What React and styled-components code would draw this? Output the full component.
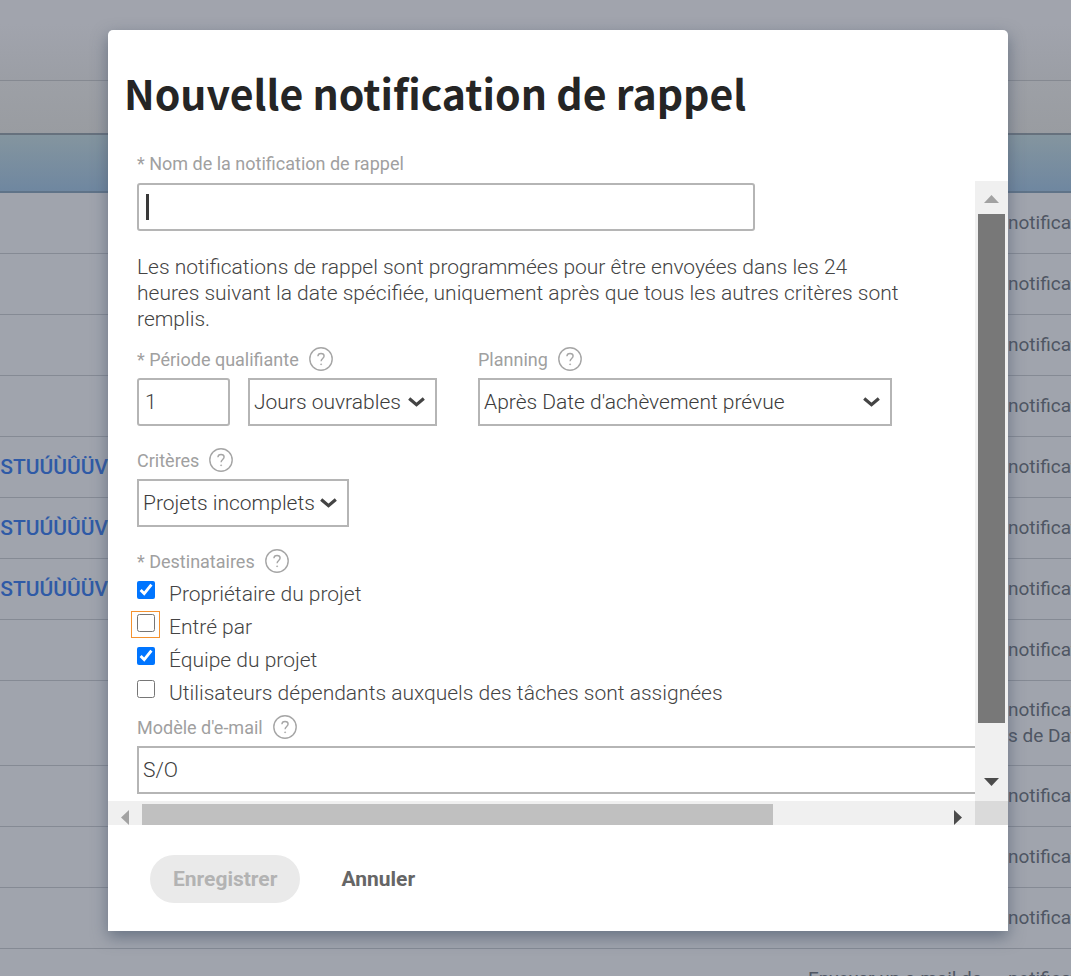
import React, { useState } from "react";
import styled, { createGlobalStyle } from "styled-components";

const sans = `Roboto, "Liberation Sans", sans-serif`;
const display = `"Noto Sans CJK JP", "Open Sans", sans-serif`;

const GlobalStyle = createGlobalStyle`
  *, *::before, *::after { box-sizing: border-box; }
  body { margin: 0; background: #a0a4ad; font-family: ${sans}; color: #666; }
`;

const Page = styled.div`
  position: relative;
  min-height: 100vh;
  overflow: hidden;
`;

const Backdrop = styled.div`
  position: absolute;
  inset: 0;
  overflow: hidden;
`;

const TopBar = styled.div`
  height: 81px;
  background: linear-gradient(#a1a4ad 0 30%, #9b9ea5);
  border-bottom: 1px solid #858991;
`;

const ToolBar = styled.div`
  height: 52px;
  background: linear-gradient(#9da0a6, #999ca1);
`;

const List = styled.table`
  width: 100%;
  border-collapse: separate;
  border-spacing: 0;
  table-layout: fixed;
`;

const HeadCell = styled.th`
  height: 60px;
  padding: 0;
  background: linear-gradient(#84959f, #6f87a0) padding-box;
  border-top: 2px solid #66717d;
  border-bottom: 2px solid #5f7388;
  width: ${(p) => p.$width || "auto"};
`;

const Cell = styled.td`
  height: ${(p) => (p.$tall ? 85 : 61)}px;
  padding: 0;
  border-bottom: 1px solid #858a94;
  font-size: 19px;
  line-height: 26px;
  color: #4f5663;
  white-space: nowrap;
  overflow: hidden;
`;

const NameLink = styled.a`
  display: flex;
  justify-content: flex-end;
  overflow: hidden;
  color: #2f5aa6;
  text-decoration: none;
  font-size: 21px;
  font-weight: 500;
`;

const Description = styled.div`
  display: grid;
  grid-template-columns: 200px auto;
`;

const Dialog = styled.div`
  position: relative;
  margin: 30px 63px 46px 108px;
  background: #fff;
  border-radius: 5px 5px 0 0;
  box-shadow: 0 6px 16px rgba(66, 82, 104, 0.6);
`;

const Title = styled.h1`
  margin: 0;
  padding: 30px 16px 0;
  font-family: ${display};
  font-weight: 700;
  font-size: 41px;
  line-height: 64px;
  color: #252525;
`;

const FieldLabel = styled.label`
  display: flex;
  align-items: center;
  gap: 10px;
  height: 24px;
  font-size: 18px;
  color: #a0a0a0;
  white-space: nowrap;
`;

const FirstLabel = styled.div`
  padding: 27px 29px 6px;
`;

const ScrollFrame = styled.div`
  display: grid;
  grid-template-columns: minmax(0, 1fr) 33px;
  grid-template-rows: 620px 24px;
`;

const Viewport = styled.div`
  overflow: hidden;
  padding: 2px 0 0 29px;
`;

const NameField = styled.div`
  position: relative;
  max-width: 618px;
`;

const TextInput = styled.input`
  display: block;
  width: ${(p) => p.$width || "100%"};
  height: 48px;
  padding: 0 6px;
  border: 2px solid #b5b5b5;
  border-radius: 3px;
  background: #fff;
  font-family: ${sans};
  font-size: 21px;
  font-weight: 300;
  color: #3c3c3c;
  outline: none;
`;

const Caret = styled.span`
  position: absolute;
  left: 9px;
  top: 11px;
  width: 3px;
  height: 26px;
  background: #3a3a3a;
`;

const Help = styled.p`
  margin: 0;
  padding: 23px 0 15px;
  font-size: 21px;
  font-weight: 300;
  line-height: 26px;
  color: #444;
  white-space: nowrap;
`;

const FieldRow = styled.div`
  display: flex;
  gap: 41px;
`;

const Field = styled.div`
  display: flex;
  flex-direction: column;
  gap: 7px;
  padding-bottom: 22px;
`;

const Controls = styled.div`
  display: flex;
  gap: 18px;
`;

const SelectBox = styled.div`
  position: relative;
  width: ${(p) => p.$width};

  svg {
    position: absolute;
    right: 12px;
    top: 18px;
    pointer-events: none;
  }
`;

const Select = styled.select`
  appearance: none;
  display: block;
  width: 100%;
  height: 48px;
  padding: 0 4px;
  border: 2px solid #b5b5b5;
  border-radius: 0;
  background: #fff;
  font-family: ${sans};
  font-size: 21px;
  font-weight: 300;
  color: #3c3c3c;
`;

const Fieldset = styled.fieldset`
  margin: 0;
  padding: 0;
  border: 0;
`;

const Legend = styled.legend`
  display: flex;
  align-items: center;
  gap: 10px;
  height: 24px;
  padding: 0;
  font-size: 18px;
  color: #a0a0a0;
`;

const Options = styled.div`
  display: grid;
  grid-auto-rows: 33px;
  padding: 4px 0 6px;
`;

const Option = styled.label`
  display: flex;
  gap: 14px;
  padding-top: 4px;
  font-size: 21px;
  font-weight: 300;
  line-height: 26px;
  color: #444;
`;

const TickBox = styled.span`
  position: relative;
  height: 18px;

  &::before {
    content: "";
    display: ${(p) => (p.$marked ? "block" : "none")};
    position: absolute;
    inset: -3px -5px -6px -6px;
    border: 1px solid #f5922f;
  }
`;

const Tick = styled.input`
  display: block;
  width: 18px;
  height: 18px;
  margin: 0;
  accent-color: #0075ff;
`;

const VerticalBar = styled.div`
  display: flex;
  flex-direction: column;
  align-items: center;
  background: #f0f0f0;
`;

const HorizontalBar = styled.div`
  display: flex;
  align-items: flex-end;
  background: #f0f0f0;
`;

const Arrow = styled.svg`
  display: block;
  flex: none;
  fill: ${(p) => (p.$dim ? "#a2a2a2" : "#4b4b4b")};
`;

const Track = styled.div`
  flex: 1;
  align-self: stretch;
  padding: ${(p) => p.$pad};
`;

const Thumb = styled.div`
  width: ${(p) => p.$width};
  height: ${(p) => p.$height};
  background: ${(p) => p.$color};
`;

const Corner = styled.div`
  background: #dadada;
`;

const Footer = styled.div`
  display: flex;
  gap: 18px;
  padding: 30px 42px 28px;
`;

const Button = styled.button`
  height: 48px;
  padding: 0 23px;
  border: 0;
  border-radius: 24px;
  background: ${(p) => (p.disabled ? "#eaeaea" : "transparent")};
  color: ${(p) => (p.disabled ? "#b3b3b3" : "#666")};
  font-family: ${sans};
  font-weight: 700;
  font-size: 21px;
`;

const QuestionIcon = () => (
  <svg width="24" height="24" viewBox="0 0 24 24" fill="none" stroke="#a6a6a6" aria-hidden="true">
    <circle cx="12" cy="12" r="11.2" strokeWidth="1.4" />
    <path d="M8.9 9.3c.1-1.8 1.3-2.8 3.1-2.8s3.1 1 3.1 2.6c0 2.3-3 2.4-3 5.1" strokeWidth="1.4" />
    <circle cx="12.1" cy="17.3" r=".5" fill="#a6a6a6" strokeWidth=".8" />
  </svg>
);

const Chevron = () => (
  <svg width="17" height="12" viewBox="0 0 17 12" fill="none" stroke="#444" strokeWidth="3.2" aria-hidden="true">
    <path d="M1.2 2.5l7.3 6.2 7.3-6.2" />
  </svg>
);

const Dropdown = ({ width, ...rest }) => (
  <SelectBox $width={width}>
    <Select {...rest} />
    <Chevron />
  </SelectBox>
);

const rows = [
  {}, {}, {}, {},
  { name: true }, { name: true }, { name: true },
  {}, { extra: "s de Date" }, {}, {}, {}, {},
];

const recipients = [
  { label: "Propriétaire du projet", on: true },
  { label: "Entré par", on: false, marked: true },
  { label: "Équipe du projet", on: true },
  { label: "Utilisateurs dépendants auxquels des tâches sont assignées", on: false },
];

export default function App() {
  const [checked, setChecked] = useState(recipients.map((r) => r.on));
  const toggle = (i) => setChecked((c) => c.map((v, j) => (i === j ? !v : v)));

  return (
    <Page>
      <GlobalStyle />
      <Backdrop aria-hidden="true">
        <TopBar />
        <ToolBar />
        <List>
          <thead>
            <tr>
              <HeadCell $width="108px" />
              <HeadCell $width="700px" />
              <HeadCell />
            </tr>
          </thead>
          <tbody>
            {rows.map((row, i) => (
              <tr key={i}>
                <Cell $tall={row.extra}>
                  {row.name && <NameLink href="#" tabIndex={-1}>STUÚÙÛÜV</NameLink>}
                </Cell>
                <Cell />
                <Cell>
                  <Description>
                    <span>Envoyer un e-mail de</span>
                    <span>notification</span>
                    {row.extra && <span />}
                    {row.extra && <span>{row.extra}</span>}
                  </Description>
                </Cell>
              </tr>
            ))}
          </tbody>
        </List>
      </Backdrop>

      <Dialog role="dialog" aria-modal="true" aria-labelledby="title">
        <Title id="title">Nouvelle notification de rappel</Title>
        <FirstLabel>
          <FieldLabel htmlFor="name">* Nom de la notification de rappel</FieldLabel>
        </FirstLabel>
        <ScrollFrame>
          <Viewport>
            <NameField>
              <TextInput id="name" type="text" />
              <Caret />
            </NameField>
            <Help>
              Les notifications de rappel sont programmées pour être envoyées dans les 24
              <br />
              heures suivant la date spécifiée, uniquement après que tous les autres critères sont
              <br />
              remplis.
            </Help>
            <FieldRow>
              <Field>
                <FieldLabel htmlFor="period">* Période qualifiante <QuestionIcon /></FieldLabel>
                <Controls>
                  <TextInput id="period" type="text" defaultValue="1" $width="93px" />
                  <Dropdown width="189px" aria-label="Unité">
                    <option>Jours ouvrables</option>
                  </Dropdown>
                </Controls>
              </Field>
              <Field>
                <FieldLabel htmlFor="planning">Planning <QuestionIcon /></FieldLabel>
                <Dropdown width="414px" id="planning">
                  <option>Après Date d'achèvement prévue</option>
                </Dropdown>
              </Field>
            </FieldRow>
            <Field>
              <FieldLabel htmlFor="criteria">Critères <QuestionIcon /></FieldLabel>
              <Dropdown width="212px" id="criteria">
                <option>Projets incomplets</option>
              </Dropdown>
            </Field>
            <Fieldset>
              <Legend>* Destinataires <QuestionIcon /></Legend>
              <Options>
                {recipients.map((r, i) => (
                  <Option key={r.label}>
                    <TickBox $marked={r.marked}>
                      <Tick type="checkbox" checked={checked[i]} onChange={() => toggle(i)} />
                    </TickBox>
                    {r.label}
                  </Option>
                ))}
              </Options>
            </Fieldset>
            <Field>
              <FieldLabel htmlFor="template">Modèle d'e-mail <QuestionIcon /></FieldLabel>
              <Dropdown width="1000px" id="template">
                <option>S/O</option>
              </Dropdown>
            </Field>
          </Viewport>
          <VerticalBar>
            <Arrow $dim width="33" height="33"><path d="M9 22l7.5-8 7.5 8z" /></Arrow>
            <Track $pad="0 3px">
              <Thumb $width="27px" $height="509px" $color="#787878" />
            </Track>
            <Arrow width="33" height="33"><path d="M9 10l7.5 8 7.5-8z" /></Arrow>
          </VerticalBar>
          <HorizontalBar>
            <Arrow $dim width="34" height="24"><path d="M21 9v15l-8-7.5z" /></Arrow>
            <Track $pad="3px 0 0">
              <Thumb $width="79%" $height="21px" $color="#c0c0c0" />
            </Track>
            <Arrow width="34" height="24"><path d="M13 9v15l8-7.5z" /></Arrow>
          </HorizontalBar>
          <Corner />
        </ScrollFrame>
        <Footer>
          <Button type="button" disabled>Enregistrer</Button>
          <Button type="button">Annuler</Button>
        </Footer>
      </Dialog>
    </Page>
  );
}
